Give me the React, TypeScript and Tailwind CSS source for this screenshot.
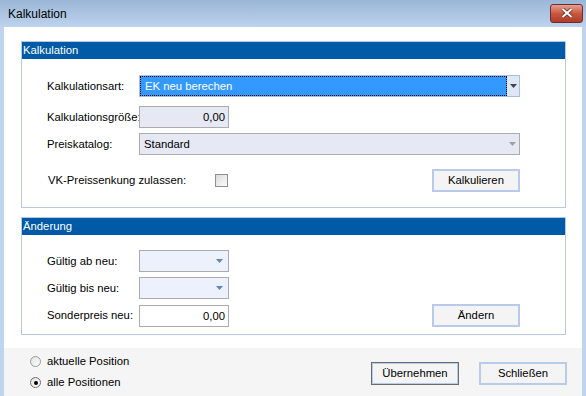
import React from "react";

const font = { fontFamily: '"Liberation Sans", Arial, sans-serif' };

function Arrow({ color = "#444" }: { color?: string }) {
  return (
    <svg width="7" height="4" viewBox="0 0 7 4">
      <path d="M0 0h7L3.5 4z" fill={color} />
    </svg>
  );
}

function Button({ label, isDefault }: { label: string; isDefault?: boolean }) {
  return (
    <div
      className={`w-[88px] h-[23px] flex items-center justify-center text-[11.3px] text-black bg-[#f4f4f4] ${
        isDefault ? "border border-[#6b6b6b] shadow-[inset_0_0_0_1px_#b9cbea]" : "border-2 border-[#b9cbea]"
      }`}
    >
      {label}
    </div>
  );
}

function GroupHeader({ title }: { title: string }) {
  return <div className="h-[17px] bg-[#005aa5] text-white text-[11.3px] leading-[17px] pl-[1px]">{title}</div>;
}

function Row({ label, children, className = "" }: { label: string; children: React.ReactNode; className?: string }) {
  return (
    <div className={`flex items-center ${className}`}>
      <div className="w-[92px] text-[11.3px] text-black whitespace-nowrap">{label}</div>
      {children}
    </div>
  );
}

export default function App() {
  return (
    <div className="w-[586px] h-[396px] flex flex-col bg-[#bfd4ef] overflow-hidden" style={font}>
      {/* title bar */}
      <div className="h-[27px] flex items-center justify-between pl-[8px] pr-[3px] bg-gradient-to-b from-[#9bb6d6] to-[#bdd3ee]">
        <span className="text-[12px] text-black">Kalkulation</span>
        <div className="w-[33px] h-[19px] mb-[1px] rounded-[3px] border border-[#6b2d2d] bg-gradient-to-b from-[#e4a08f] via-[#c9573f] to-[#b03b2a] flex items-center justify-center">
          <svg width="12" height="10" viewBox="0 0 12 10">
            <path d="M1.5 1l9 8M10.5 1l-9 8" stroke="#5a2a20" strokeWidth="3.4" />
            <path d="M1.5 1l9 8M10.5 1l-9 8" stroke="#fff" strokeWidth="2" />
          </svg>
        </div>
      </div>

      {/* client area */}
      <div className="flex-1 mx-[4px] bg-white flex flex-col">
        <div className="pl-[17px] pr-[16px] pt-[14px]">
          {/* Kalkulation group */}
          <div className="h-[167px] border border-[#b9c8dc] flex flex-col">
            <GroupHeader title="Kalkulation" />
            <div className="pl-[25px] flex flex-col">
              <Row label="Kalkulationsart:" className="mt-[16px]">
                <div className="w-[381px] h-[22px] flex border border-[#a9bfe0] bg-[#dce7f7]">
                  <div className="flex-1 bg-[#3399ff] border border-dotted border-black text-white text-[11.3px] leading-[18px] pl-[4px]">
                    EK neu berechen
                  </div>
                  <div className="w-[12px] flex items-center justify-center">
                    <Arrow />
                  </div>
                </div>
              </Row>
              <Row label="Kalkulationsgröße:" className="mt-[9px]">
                <div className="w-[90px] h-[22px] border border-[#acacac] bg-[#e6e9f4] text-[11.3px] text-right pr-[3px] leading-[20px]">
                  0,00
                </div>
              </Row>
              <Row label="Preiskatalog:" className="mt-[5px]">
                <div className="w-[381px] h-[22px] flex items-center justify-between border border-[#acacac] bg-[#e6e9f4] text-[11.3px] pl-[4px] pr-[3px]">
                  <span>Standard</span>
                  <Arrow color="#a0a0a0" />
                </div>
              </Row>
              <div className="flex items-center mt-[14px] pr-[45px]">
                <span className="ml-[1px] w-[167px] text-[11.3px] text-black whitespace-nowrap">VK-Preissenkung zulassen:</span>
                <div className="w-[13px] h-[13px] border border-[#8e8f8f] bg-gradient-to-br from-[#dcdcdc] to-[#fbfbfb]" />
                <div className="ml-auto">
                  <Button label="Kalkulieren" />
                </div>
              </div>
            </div>
          </div>

          {/* Änderung group */}
          <div className="mt-[9px] h-[118px] border border-[#b9c8dc] flex flex-col">
            <GroupHeader title="Änderung" />
            <div className="pl-[25px] pr-[45px] flex flex-col">
              <Row label="Gültig ab neu:" className="mt-[15px]">
                <div className="w-[90px] h-[22px] flex items-center justify-end pr-[5px] border border-[#acacac] bg-[#edf1fc]">
                  <Arrow color="#5c87bf" />
                </div>
              </Row>
              <Row label="Gültig bis neu:" className="mt-[5px]">
                <div className="w-[90px] h-[22px] flex items-center justify-end pr-[5px] border border-[#acacac] bg-[#edf1fc]">
                  <Arrow color="#5c87bf" />
                </div>
              </Row>
              <Row label="Sonderpreis neu:" className="mt-[5px]">
                <div className="w-[90px] h-[22px] border border-[#acacac] bg-white text-[11.3px] text-right pr-[3px] leading-[20px]">
                  0,00
                </div>
                <div className="ml-auto">
                  <Button label="Ändern" />
                </div>
              </Row>
            </div>
          </div>
        </div>

        {/* bottom bar */}
        <div className="mt-[13px] flex-1 bg-[#f5f5f5] flex items-start pl-[26px] pr-[15px] pt-[7px]">
          <div className="flex flex-col gap-[8px]">
            <label className="flex items-center gap-[6px] text-[11.3px] text-black h-[13px]">
              <span className="w-[11px] h-[11px] rounded-full border border-[#9a9a9a] bg-gradient-to-br from-[#e0e0e0] to-white" />
              aktuelle Position
            </label>
            <label className="flex items-center gap-[6px] text-[11.3px] text-black h-[13px]">
              <span className="w-[11px] h-[11px] rounded-full border border-[#6e6e6e] bg-gradient-to-br from-[#e0e0e0] to-white flex items-center justify-center">
                <span className="w-[4px] h-[4px] rounded-full bg-black" />
              </span>
              alle Positionen
            </label>
          </div>
          <div className="ml-auto mt-[7px] flex gap-[20px]">
            <Button label="Übernehmen" isDefault />
            <Button label="Schließen" />
          </div>
        </div>
      </div>
    </div>
  );
}
